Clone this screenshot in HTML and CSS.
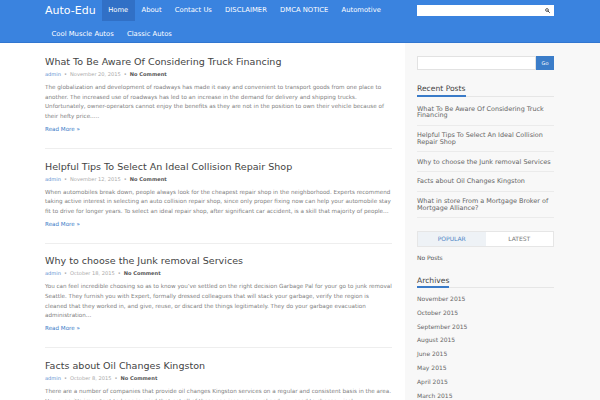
FILE: index.html
```html
<!DOCTYPE html>
<html>
<head>
<meta charset="utf-8">
<link rel="stylesheet" href="styles.css">
</head>
<body>
<header class="top">
  <div class="top-inner">
    <nav class="nav">
      <a class="logo">Auto-Edu</a>
      <a class="nav-item active">Home</a>
      <a class="nav-item">About</a>
      <a class="nav-item">Contact Us</a>
      <a class="nav-item">DISCLAIMER</a>
      <a class="nav-item">DMCA NOTICE</a>
      <a class="nav-item">Automotive</a>
      <a class="nav-item">Cool Muscle Autos</a>
      <a class="nav-item">Classic Autos</a>
    </nav>
    <div class="top-search">
      <svg class="mag" viewBox="0 0 10 10" width="5" height="5"><circle cx="4" cy="4" r="2.8" fill="none" stroke="#333" stroke-width="1.6"/><line x1="6" y1="6" x2="9" y2="9" stroke="#333" stroke-width="1.8" stroke-linecap="round"/></svg>
    </div>
  </div>
</header>
<div class="page">
  <main class="main">
    <article class="post">
      <h2 class="post-title">What To Be Aware Of Considering Truck Financing</h2>
      <div class="meta"><span class="author">admin</span><span class="dot">•</span><span class="date">November 20, 2015</span><span class="dot">•</span><span class="comments">No Comment</span></div>
      <p class="excerpt">The globalization and development of roadways has made it easy and convenient to transport goods from one place to another. The increased use of roadways has led to an increase in the demand for delivery and shipping trucks. Unfortunately, owner-operators cannot enjoy the benefits as they are not in the position to own their vehicle because of their hefty price…..</p>
      <a class="more">Read More »</a>
    </article>
    <article class="post">
      <h2 class="post-title">Helpful Tips To Select An Ideal Collision Repair Shop</h2>
      <div class="meta"><span class="author">admin</span><span class="dot">•</span><span class="date">November 12, 2015</span><span class="dot">•</span><span class="comments">No Comment</span></div>
      <p class="excerpt">When automobiles break down, people always look for the cheapest repair shop in the neighborhood. Experts recommend taking active interest in selecting an auto collision repair shop, since only proper fixing now can help your automobile stay fit to drive for longer years. To select an ideal repair shop, after significant car accident, is a skill that majority of people…</p>
      <a class="more">Read More »</a>
    </article>
    <article class="post">
      <h2 class="post-title">Why to choose the Junk removal Services</h2>
      <div class="meta"><span class="author">admin</span><span class="dot">•</span><span class="date">October 18, 2015</span><span class="dot">•</span><span class="comments">No Comment</span></div>
      <p class="excerpt">You can feel incredible choosing so as to know you’ve settled on the right decision Garbage Pal for your go to junk removal Seattle. They furnish you with Expert, formally dressed colleagues that will stack your garbage, verify the region is cleaned that they worked in, and give, reuse, or discard the things legitimately. They do your garbage evacuation administration…</p>
      <a class="more">Read More »</a>
    </article>
    <article class="post">
      <h2 class="post-title">Facts about Oil Changes Kingston</h2>
      <div class="meta"><span class="author">admin</span><span class="dot">•</span><span class="date">October 8, 2015</span><span class="dot">•</span><span class="comments">No Comment</span></div>
      <p class="excerpt">There are a number of companies that provide oil changes Kingston services on a regular and consistent basis in the area. However, it’s important to keep in mind that not all of these services are equal and you need to choose wisely.</p>
      <a class="more">Read More »</a>
    </article>
  </main>
  <aside class="sidebar">
    <div class="side-search">
      <div class="side-input"></div>
      <div class="go">Go</div>
    </div>
    <section class="widget">
      <h3 class="widget-title"><span>Recent Posts</span></h3>
      <ul class="recent">
        <li>What To Be Aware Of Considering Truck Financing</li>
        <li>Helpful Tips To Select An Ideal Collision Repair Shop</li>
        <li>Why to choose the Junk removal Services</li>
        <li>Facts about Oil Changes Kingston</li>
        <li>What in store From a Mortgage Broker of Mortgage Alliance?</li>
      </ul>
    </section>
    <div class="tabs">
      <div class="tab on">POPULAR</div>
      <div class="tab">LATEST</div>
    </div>
    <p class="noposts">No Posts</p>
    <section class="widget archives">
      <h3 class="widget-title"><span>Archives</span></h3>
      <ul class="arch">
        <li>November 2015</li>
        <li>October 2015</li>
        <li>September 2015</li>
        <li>August 2015</li>
        <li>June 2015</li>
        <li>May 2015</li>
        <li>April 2015</li>
        <li>March 2015</li>
      </ul>
    </section>
  </aside>
</div>
</body>
</html>
```
FILE: styles.css
```css
* { box-sizing: border-box; }
html, body { margin: 0; padding: 0; }
body {
  font-family: "DejaVu Sans", "Liberation Sans", sans-serif;
  background: #fff;
  color: #777;
  width: 600px;
  height: 400px;
  overflow: hidden;
}
a { text-decoration: none; }

.top {
  background: #3a83df;
  border-bottom: 1px solid #3176d0;
  height: 43px;
  overflow: hidden;
}
.top-inner {
  display: flex;
  align-items: flex-start;
  padding-left: 45px;
}
.nav {
  display: flex;
  flex-wrap: wrap;
  align-items: center;
  row-gap: 3px;
  width: 360px;
}
.logo {
  color: #fff;
  font-size: 11px;
  line-height: 21px;
  height: 21px;
  margin-right: 6px;
}
.nav-item {
  color: #fff;
  font-size: 6.8px;
  line-height: 21px;
  height: 21px;
  padding: 0 6.6px;
}
.nav-item.active { background: #3170c6; }

.top-search {
  margin-left: 12px;
  margin-top: 5px;
  width: 137px;
  height: 11px;
  background: #fff;
  display: flex;
  align-items: center;
  justify-content: flex-end;
  padding-right: 4px;
}
.mag { display: block; }

.page {
  display: flex;
  align-items: flex-start;
}
.main {
  margin-left: 45px;
  width: 347px;
  padding-top: 13px;
}
.post {
  border-bottom: 1px solid #eeeeee;
  padding-top: 11.5px;
  padding-bottom: 13.5px;
}
.post:first-child { padding-top: 0; }
.post-title {
  margin: 0;
  font-weight: normal;
  font-size: 9.55px;
  line-height: 12px;
  color: #444;
}
.meta {
  margin-top: 2px;
  font-size: 5.1px;
  line-height: 8px;
  color: #aaa;
}
.author { color: #5b8fd0; }
.dot { margin: 0 3px; color: #999; }
.comments { color: #555; font-weight: bold; }
.excerpt {
  margin: 5px 0 0;
  font-size: 5.64px;
  line-height: 9.7px;
  color: #808080;
}
.more {
  display: block;
  margin-top: 3px;
  font-size: 5.6px;
  line-height: 9.7px;
  color: #3a7bc8;
}

.sidebar {
  margin-left: 13px;
  width: 195px;
  height: 357px;
  background: #f8f8f8;
  padding: 13px 46px 0 12px;
}
.side-search {
  display: flex;
  height: 14px;
}
.side-input {
  flex: 1;
  background: #fff;
  border: 1px solid #e2e2e2;
}
.go {
  width: 18px;
  background: #3b7dc9;
  color: #fff;
  font-size: 5px;
  line-height: 14px;
  text-align: center;
}
.widget { margin-top: 14px; }
.widget-title {
  display: flex;
  margin: 0;
  font-weight: normal;
  font-size: 7.6px;
  color: #444;
  border-bottom: 1px solid #e6e6e6;
}
.widget-title span {
  display: block;
  line-height: 10px;
  padding-bottom: 0.5px;
  border-bottom: 2px solid #3a7bc8;
  margin-bottom: -1px;
}
.recent {
  list-style: none;
  margin: 3px 0 0;
  padding: 0;
}
.recent li {
  font-size: 6.45px;
  line-height: 6.6px;
  padding: 6.3px 0 5.9px;
  border-bottom: 1px solid #ebebeb;
  color: #666;
}
.tabs {
  display: flex;
  margin-top: 13px;
  border: 1px solid #e6e6e6;
  height: 16px;
}
.tab {
  flex: 1;
  text-align: center;
  font-size: 6px;
  line-height: 14px;
  background: #fff;
  color: #777;
}
.tab.on { background: #eef2f6; color: #4f86c6; }
.noposts {
  margin: 6.7px 0 0;
  font-size: 6px;
  line-height: 8px;
  color: #555;
}
.archives { margin-top: 14px; }
.arch {
  list-style: none;
  margin: 3.3px 0 0;
  padding: 0;
}
.arch li {
  font-size: 6px;
  line-height: 7px;
  padding: 3.4px 0;
  color: #666;
}
```
